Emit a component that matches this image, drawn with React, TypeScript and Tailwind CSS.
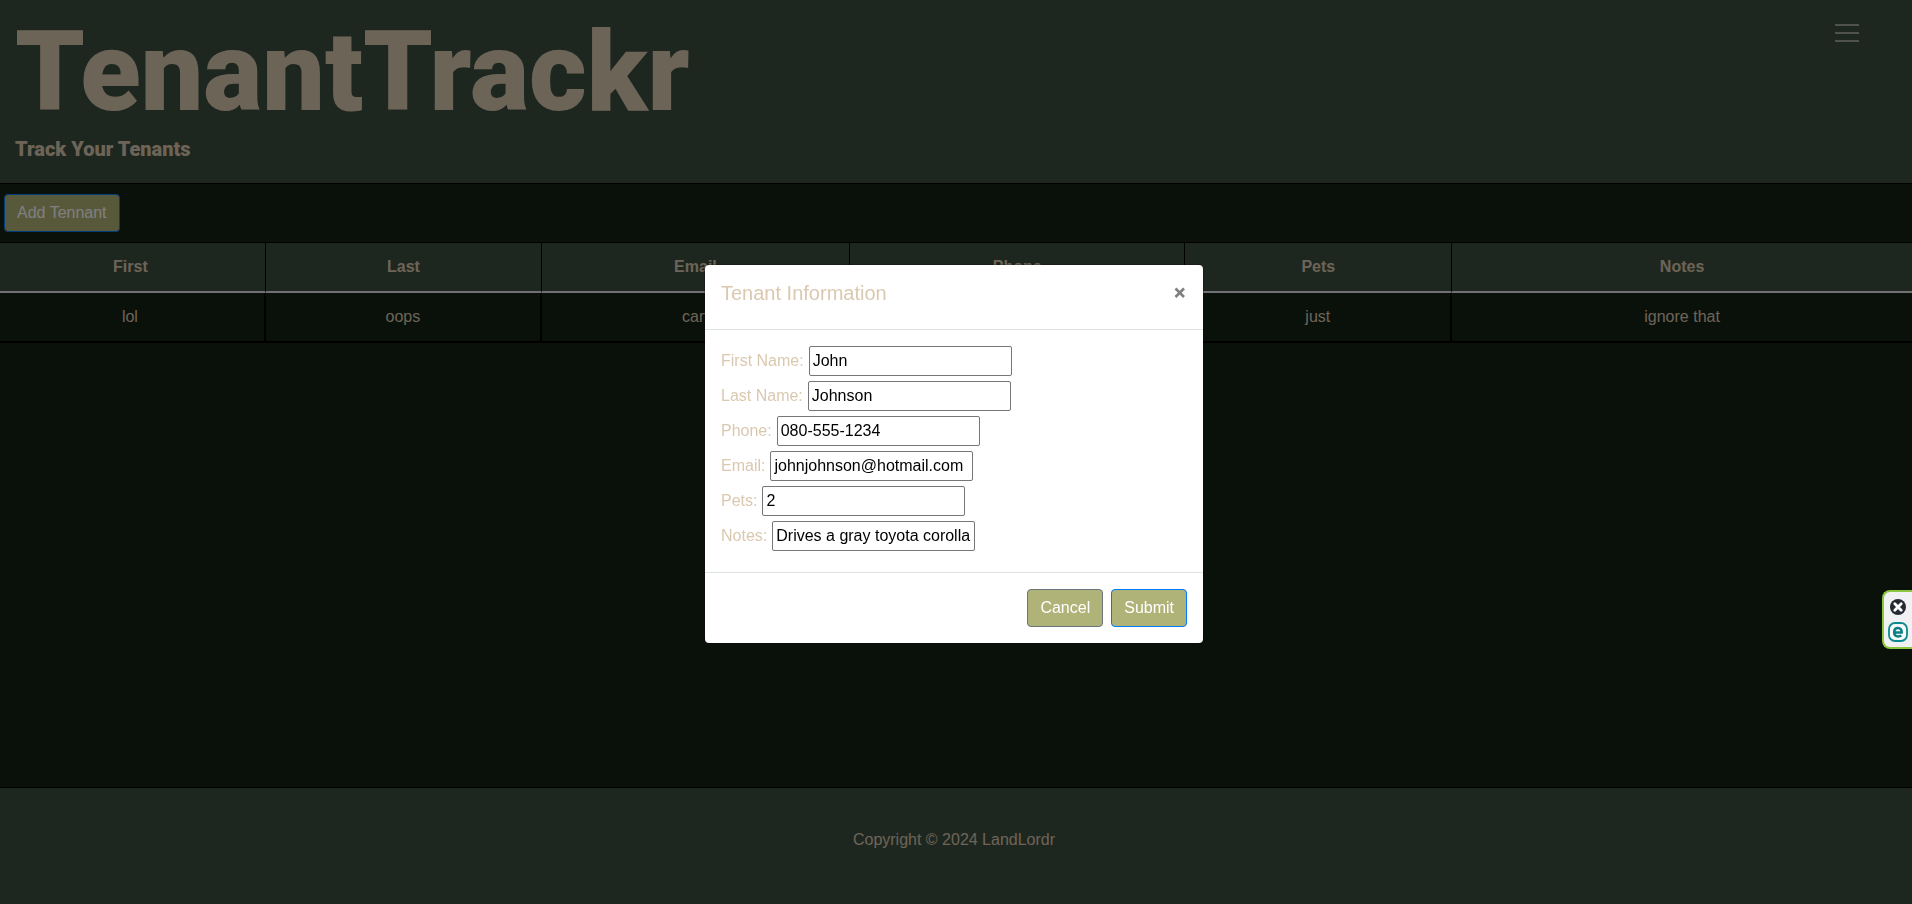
import { useId } from "react";

const columns = ["First", "Last", "Email", "Phone", "Pets", "Notes"];
const columnWidths = [
  "w-[13.9%]",
  "w-[14.45%]",
  "w-[16.1%]",
  "w-[17.55%]",
  "w-[13.95%]",
  "w-[24.05%]",
];
const tenants = [["lol", "oops", "can", "you", "just", "ignore that"]];

const fields = [
  { label: "First Name:", value: "John", type: "text" },
  { label: "Last Name:", value: "Johnson", type: "text" },
  { label: "Phone:", value: "080-555-1234", type: "tel" },
  { label: "Email:", value: "johnjohnson@hotmail.com", type: "email" },
  { label: "Pets:", value: "2", type: "text" },
  { label: "Notes:", value: "Drives a gray toyota corolla", type: "text" },
];

function Header() {
  return (
    <header className="flex items-start justify-between border-b border-black bg-[#3d4f3f] pt-[19px] pr-12 pb-[22px] pl-[15px]">
      <div className="font-['Roboto','Noto_Sans',sans-serif] font-black">
        <h1 className="text-[111px] leading-[106px]">TenantTrackr</h1>
        <h2 className="pt-3 text-[20px] leading-6">Track Your Tenants</h2>
      </div>
      <button type="button" aria-label="Menu" className="flex flex-col gap-1.5 p-[5px]">
        <span className="h-0.5 w-6 bg-[#9da399]" />
        <span className="h-0.5 w-6 bg-[#9da399]" />
        <span className="h-0.5 w-6 bg-[#9da399]" />
      </button>
    </header>
  );
}

function TenantTable() {
  return (
    <table className="w-full table-fixed border-separate border-spacing-0 text-center">
      <thead>
        <tr>
          {columns.map((name, i) => (
            <th
              key={name}
              scope="col"
              className={`${columnWidths[i]} border-r border-b-2 border-r-black border-b-[#dee2e6] bg-[#3d4f3f] py-3 leading-6 font-bold first:pr-1 last:border-r-0`}
            >
              {name}
            </th>
          ))}
        </tr>
      </thead>
      <tbody>
        {tenants.map((row) => (
          <tr key={row.join()}>
            {row.map((cell) => (
              <td
                key={cell}
                className="border-r-2 border-b-2 border-black py-3 leading-6 first:pr-1 last:border-r-0"
              >
                {cell}
              </td>
            ))}
          </tr>
        ))}
      </tbody>
    </table>
  );
}

function Field({ label, value, type }: { label: string; value: string; type: string }) {
  const id = useId();
  return (
    <div className="flex items-center gap-[5px]">
      <label htmlFor={id}>{label}</label>
      <input
        id={id}
        type={type}
        defaultValue={value}
        className="h-[30px] w-[203px] rounded-xs border border-[#767676] bg-white px-[3px] text-black"
      />
    </div>
  );
}

function TenantModal() {
  return (
    <div className="fixed inset-0 flex items-center justify-center bg-black/50 pt-1 pr-1">
      <div
        role="dialog"
        aria-modal="true"
        aria-labelledby="tenant-modal-title"
        className="w-full max-w-[500px] rounded-[5px] border border-black/20 bg-white bg-clip-padding"
      >
        <div className="flex items-start justify-between border-b border-[#dee2e6] px-4 pt-[13px] pb-[21px]">
          <h5 id="tenant-modal-title" className="text-[20px] leading-[30px]">
            Tenant Information
          </h5>
          <button type="button" aria-label="Close" className="pt-2 text-[#7f7f7f]">
            <svg viewBox="0 0 14 14" className="size-3.5" aria-hidden="true">
              <path d="M2.500 2.500l8.500 8.500M11 2.500l-8.500 8.500" stroke="currentColor" strokeWidth="2.6" fill="none" />
            </svg>
          </button>
        </div>
        <form className="flex flex-col gap-[5px] px-4 pt-4 pb-[21px]">
          {fields.map((field) => (
            <Field key={field.label} {...field} />
          ))}
        </form>
        <div className="flex justify-end gap-2 border-t border-[#dee2e6] p-4">
          <button
            type="button"
            className="rounded-sm border border-[#6c757d] bg-[#b0b377] px-3 py-1.5 leading-6 text-white"
          >
            Cancel
          </button>
          <button
            type="button"
            className="rounded-sm border border-[#007bff] bg-[#b0b377] px-3 py-1.5 leading-6 text-white"
          >
            Submit
          </button>
        </div>
      </div>
    </div>
  );
}

function SideWidget() {
  return (
    <aside className="fixed top-[590px] right-0 flex w-[30px] flex-col items-end gap-[7px] rounded-l-lg border-2 border-r-0 border-[#8cc63f] bg-[#f1f1f3] pt-[7px] pr-1 pb-[5px]">
      <button type="button" aria-label="Close widget">
        <svg viewBox="0 0 20 16" className="h-4 w-5" aria-hidden="true">
          <circle cx="10" cy="8" r="8" fill="#252a33" />
          <path d="M6.8 4.8l6.4 6.4M13.2 4.8l-6.4 6.4" stroke="#fff" strokeWidth="2.8" strokeLinecap="round" />
        </svg>
      </button>
      <button type="button" aria-label="Open widget">
        <svg viewBox="0 0 20 20" className="size-5" aria-hidden="true">
          <rect x="1" y="1" width="18" height="18" rx="6" fill="#f7fafa" stroke="#0b8a8f" strokeWidth="1.8" />
          <path
            d="M6.500 10.500h7.200c.2-3-1.500-4.500-3.700-4.500-2.300 0-3.800 1.700-3.800 4.200 0 2.700 1.700 4.200 4 4.200 1.300 0 2.300-.3 3.100-1"
            fill="none"
            stroke="#0b7f86"
            strokeWidth="2.500"
          />
        </svg>
      </button>
    </aside>
  );
}

export default function App() {
  return (
    <div className="flex min-h-screen flex-col bg-[#152317] font-['Liberation_Sans',Arial,sans-serif] text-[16px] text-[#dbc8b0]">
      <Header />
      <main className="flex-1">
        <div className="flex border-b border-black px-1 py-2.5">
          <button
            type="button"
            className="rounded-sm border border-[#007bff] bg-[#b0b377] px-3 py-1.5 leading-6 text-white"
          >
            Add Tennant
          </button>
        </div>
        <TenantTable />
      </main>
      <footer className="border-t border-black bg-[#3d4f3f] pt-10 pr-1 pb-[52px] text-center leading-6">
        <p>Copyright © 2024 LandLordr</p>
      </footer>
      <TenantModal />
      <SideWidget />
    </div>
  );
}
